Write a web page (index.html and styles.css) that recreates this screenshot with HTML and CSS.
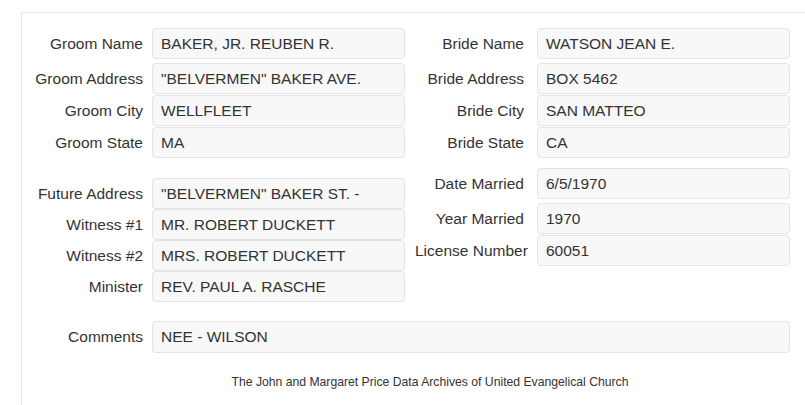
FILE: index.html
```html
<!DOCTYPE html>
<html lang="en">
<head>
  <meta charset="UTF-8">
  <title>Marriage Record</title>
  <link rel="stylesheet" href="styles.css">
</head>
<body>
  <div class="frame">
    <div class="section">
      <div class="col col-left">
        <div class="row first"><span class="label">Groom Name</span><span class="value">BAKER, JR. REUBEN R.</span></div>
        <div class="row"><span class="label">Groom Address</span><span class="value">"BELVERMEN" BAKER AVE.</span></div>
        <div class="row"><span class="label">Groom City</span><span class="value">WELLFLEET</span></div>
        <div class="row"><span class="label">Groom State</span><span class="value">MA</span></div>
      </div>
      <div class="col col-right">
        <div class="row first"><span class="label">Bride Name</span><span class="value">WATSON JEAN E.</span></div>
        <div class="row"><span class="label">Bride Address</span><span class="value">BOX 5462</span></div>
        <div class="row"><span class="label">Bride City</span><span class="value">SAN MATTEO</span></div>
        <div class="row"><span class="label">Bride State</span><span class="value">CA</span></div>
      </div>
    </div>

    <div class="section second">
      <div class="col col-left tight">
        <div class="row"><span class="label">Future Address</span><span class="value">"BELVERMEN" BAKER ST. -</span></div>
        <div class="row"><span class="label">Witness #1</span><span class="value">MR. ROBERT DUCKETT</span></div>
        <div class="row"><span class="label">Witness #2</span><span class="value">MRS. ROBERT DUCKETT</span></div>
        <div class="row"><span class="label">Minister</span><span class="value">REV. PAUL A. RASCHE</span></div>
      </div>
      <div class="col col-right">
        <div class="row first"><span class="label">Date Married</span><span class="value">6/5/1970</span></div>
        <div class="row"><span class="label">Year Married</span><span class="value">1970</span></div>
        <div class="row"><span class="label">License Number</span><span class="value">60051</span></div>
      </div>
    </div>

    <div class="row comments"><span class="label">Comments</span><span class="value">NEE - WILSON</span></div>

    <p class="footer">The John and Margaret Price Data Archives of United Evangelical Church</p>
  </div>
</body>
</html>
```

FILE: styles.css
```css
html, body {
  margin: 0;
  overflow: hidden;
}

body {
  font-family: "Liberation Sans", Arial, sans-serif;
  font-size: 15.5px;
  color: #333;
  background: #fff;
}

.frame {
  margin: 12px 0 0 21px;
  width: 816px;
  height: 377px;
  border-top: 1px solid #e5e5e5;
  border-left: 1px solid #e5e5e5;
  padding-top: 15px;
}

.section {
  display: flex;
  align-items: flex-start;
}

.col {
  display: flex;
  flex-direction: column;
  gap: 1px;
}

.col-left .label {
  width: 121px;
}

.col-right {
  margin-left: 10px;
}

.col-right .label {
  width: 109px;
  margin-right: 13px;
}

.row {
  display: flex;
  align-items: center;
  height: 31px;
}

.row.first {
  margin-bottom: 3px;
}

.label {
  text-align: right;
  white-space: nowrap;
  margin-right: 9px;
}

.value {
  box-sizing: border-box;
  width: 253px;
  height: 100%;
  display: flex;
  align-items: center;
  padding: 0 8px;
  background: #f8f8f8;
  border: 1px solid #e4e4e4;
  border-radius: 4px;
  white-space: nowrap;
}

.second .col-left {
  margin-top: 20px;
  gap: 0;
}

.second .col-right {
  margin-top: 10px;
}

.comments {
  margin-top: 19px;
  height: 32px;
}

.comments .label {
  width: 121px;
}

.comments .value {
  width: 638px;
}

.footer {
  margin: 22px 0 0;
  text-align: center;
  font-size: 12.2px;
}
```
